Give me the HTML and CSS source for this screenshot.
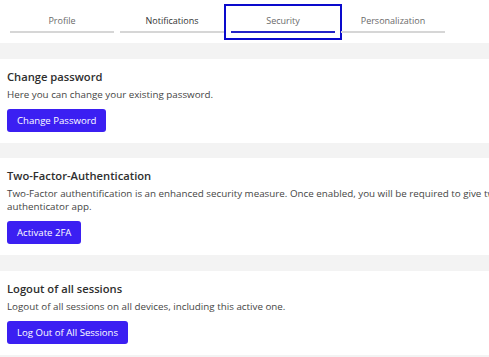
FILE: index.html
```html
<!DOCTYPE html>
<html>
<head>
<meta charset="utf-8">
<link rel="stylesheet" href="styles.css">
</head>
<body>
<div class="page">
  <nav class="tabs">
    <div class="tab">Profile</div>
    <div class="tab dark">Notifications</div>
    <div class="tab active">Security</div>
    <div class="tab">Personalization</div>
  </nav>
  <main class="content">
    <section class="card">
      <h2 class="title">Change password</h2>
      <p class="desc">Here you can change your existing password.</p>
      <button class="btn">Change Password</button>
    </section>
    <section class="card">
      <h2 class="title">Two-Factor-Authentication</h2>
      <p class="desc">Two-Factor authentification is an enhanced security measure. Once enabled, you will be required to give two types of identification when you log in, such as your password and a code from an<br>authenticator app.</p>
      <button class="btn">Activate 2FA</button>
    </section>
    <section class="card card-last">
      <h2 class="title">Logout of all sessions</h2>
      <p class="desc">Logout of all sessions on all devices, including this active one.</p>
      <button class="btn">Log Out of All Sessions</button>
    </section>
  </main>
</div>
</body>
</html>
```

FILE: styles.css
```css
* { box-sizing: border-box; }
html, body { margin: 0; padding: 0; }
body {
  background: #f3f3f3;
  font-family: "Open Sans", "Noto Sans", sans-serif;
  color: #333;
  overflow: hidden;
  width: 489px;
  height: 357px;
}
.page { width: 489px; }
.tabs {
  background: #fff;
  height: 43px;
  display: flex;
  gap: 6px;
  padding: 11px 0 0 10px;
}
.tab {
  width: 104px;
  height: 22px;
  border-bottom: 2px solid #d6d6d6;
  font-size: 9px;
  color: #6a6a6a;
  text-align: center;
  padding-top: 3px;
}
.tab.dark { color: #333; }
.tab.active {
  margin-left: 1px;
  border-bottom-color: #2323c8;
  outline: 2px solid #0a0acc;
  outline-offset: 5px;
}
.content {
  padding-top: 16px;
  display: flex;
  flex-direction: column;
  gap: 15px;
}
.card {
  background: #fff;
  padding: 10px 7px 11px 7px;
  overflow: hidden;
}
.card-last { margin-top: 1px; }
.title {
  margin: 0;
  font-size: 11.2px;
  font-weight: 600;
  line-height: 15px;
  color: #2e2e2e;
}
.desc {
  margin: 4px 0 8px;
  font-size: 9.8px;
  line-height: 13px;
  color: #454545;
  white-space: nowrap;
}
.btn {
  display: block;
  background: #3b1ff2;
  color: #fff;
  border: none;
  border-radius: 3px;
  height: 23px;
  padding: 0 10px;
  font-family: inherit;
  font-size: 9.6px;
  font-weight: 500;
}
```
